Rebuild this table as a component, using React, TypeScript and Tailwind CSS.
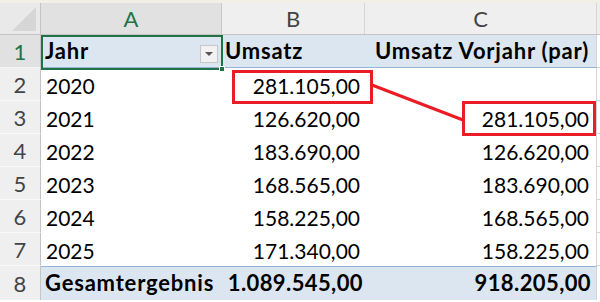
import React from "react";

const rows = [
  { n: "2", a: "2020", b: "281.105,00", c: "" },
  { n: "3", a: "2021", b: "126.620,00", c: "281.105,00" },
  { n: "4", a: "2022", b: "183.690,00", c: "126.620,00" },
  { n: "5", a: "2023", b: "168.565,00", c: "183.690,00" },
  { n: "6", a: "2024", b: "158.225,00", c: "168.565,00" },
  { n: "7", a: "2025", b: "171.340,00", c: "158.225,00" },
];

const bold = "font-bold text-[22px] tracking-[0.8px]";
const boldNum = "font-bold text-[22px] tracking-[0.4px]";

export default function App() {
  return (
    <div className="relative w-[600px] h-[302px] overflow-hidden bg-white font-['Lato',sans-serif] text-[21px] text-black">
      <div className="h-[3px] bg-[#f3eee6]" />
      {/* column header */}
      <div className="flex h-[32px] border-b border-[#c4c4c4] bg-[#efefef] text-[#444] text-[22px]">
        <div className="relative w-[41px] border-r border-[#c4c4c4] bg-[#e9e9e9]">
          <svg className="absolute inset-0" width="40" height="31">
            <polygon points="36,4 36,28 12,28" fill="#d6d6d6" />
          </svg>
        </div>
        <div className="w-[181px] flex items-center justify-center bg-[#e1e1e1] text-[#217346] border-r border-[#c8c8c8]">A</div>
        <div className="w-[143px] flex items-center justify-center border-r border-[#d6d6d6]">B</div>
        <div className="w-[232px] flex items-center justify-center border-r border-[#d6d6d6]">C</div>
        <div className="flex-1" />
      </div>
      {/* row 1 */}
      <div className="flex h-[33px]">
        <div className="w-[41px] flex items-center justify-center bg-[#e1e1e1] text-[#217346] border-r border-[#c4c4c4] text-[22px] border-b border-b-[#f3f3f3]">1</div>
        <div className={`w-[181px] flex items-end pb-0 pl-[4px] bg-[#dce6f1] border-b border-[#95b3d7] ${bold}`}>Jahr</div>
        <div className={`w-[143px] flex items-end pb-0 pl-[3px] bg-[#dce6f1] border-b border-[#95b3d7] whitespace-nowrap ${bold}`}>Umsatz</div>
        <div className={`w-[232px] flex items-end justify-end pb-0 pr-[7px] bg-[#dce6f1] border-b border-[#95b3d7] border-r border-r-[#d4d4d4] whitespace-nowrap ${bold}`}>Umsatz Vorjahr (par)</div>
        <div className="flex-1 border-b border-[#d4d4d4]" />
      </div>
      {rows.map((r) => (
        <div key={r.n} className="flex h-[33px]">
          <div className="w-[41px] flex items-center justify-center bg-[#efefef] text-[#444] text-[22px] border-r border-[#c4c4c4] border-b border-b-[#f9f9f9]">{r.n}</div>
          <div className="w-[181px] flex items-end pb-0 pl-[5px]">{r.a}</div>
          <div className="w-[143px] flex items-end justify-end pb-0 pr-[5px]">{r.b}</div>
          <div className="w-[232px] flex items-end justify-end pb-0 pr-[7px] border-r border-[#d4d4d4]">{r.c}</div>
          <div className="flex-1 border-b border-[#d4d4d4]" />
        </div>
      ))}
      {/* total row */}
      <div className="flex h-[34px]">
        <div className="w-[41px] flex items-center justify-center bg-[#efefef] text-[#444] text-[22px] border-r border-[#c4c4c4]">8</div>
        <div className={`w-[181px] flex items-end pb-[1px] pl-[4px] bg-[#dce6f1] border-t border-[#95b3d7] whitespace-nowrap ${bold}`}>Gesamtergebnis</div>
        <div className={`w-[143px] flex items-end justify-end pb-[1px] pr-[2px] bg-[#dce6f1] border-t border-[#95b3d7] whitespace-nowrap ${boldNum}`}>1.089.545,00</div>
        <div className={`w-[232px] flex items-end justify-end pb-[1px] pr-[5px] bg-[#dce6f1] border-t border-[#95b3d7] border-r border-r-[#d4d4d4] whitespace-nowrap ${boldNum}`}>918.205,00</div>
        <div className="flex-1" />
      </div>

      {/* selection box around A1 */}
      <div className="absolute left-[41px] top-[35px] w-[182px] h-[35px] border-2 border-[#217346] pointer-events-none" />
      <div className="absolute left-[219px] top-[66px] w-[6px] h-[6px] bg-[#217346] border border-white" />
      {/* dropdown button */}
      <div className="absolute left-[200px] top-[45px] w-[18px] h-[18px] bg-[#f2f2f2] border border-[#c6c6c6] flex items-center justify-center">
        <svg width="8" height="5" viewBox="0 0 8 5">
          <polygon points="0,0 8,0 4,4" fill="#555" />
        </svg>
      </div>

      {/* red annotations */}
      <svg className="absolute left-0 top-0 pointer-events-none" width="600" height="302">
        <rect x="233.5" y="71.5" width="138" height="31" fill="none" stroke="#ea1c26" strokeWidth="3" />
        <rect x="463.5" y="102.5" width="131" height="32" fill="none" stroke="#ea1c26" strokeWidth="3" />
        <line x1="372" y1="85" x2="463" y2="120" stroke="#ea1c26" strokeWidth="3" />
      </svg>
    </div>
  );
}
